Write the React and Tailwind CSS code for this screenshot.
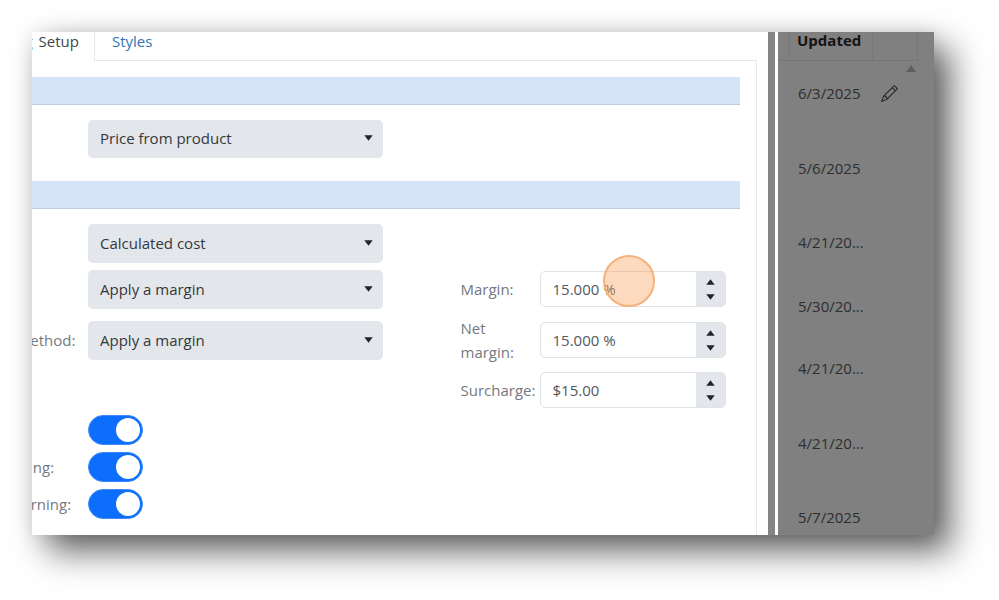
import React from "react";
import { BsPencil } from "react-icons/bs";

const font = { fontFamily: '"Open Sans", "Noto Sans", sans-serif' };

function Caret({ className = "" }) {
  return (
    <svg width="9" height="6" viewBox="0 0 9 6" className={className}>
      <path d="M0.3 0.3 H8.7 L4.5 5.7 Z" fill="currentColor" />
    </svg>
  );
}

function SelectBox({ label, className = "" }) {
  return (
    <div className={`w-[294.5px] rounded-[5px] bg-[#e3e6eb] flex items-center justify-between pl-[12px] pr-[10px] text-[15px] text-[#33383d] ${className}`}>
      <span className="-mt-[1px]">{label}</span>
      <Caret className="text-[#212529] -mt-[2px]" />
    </div>
  );
}

function Toggle() {
  return (
    <div className="w-[55px] h-[30px] rounded-full bg-[#0d6efd] border border-[#3d8bfd] flex items-center justify-end pr-[2px]">
      <div className="w-[24px] h-[24px] rounded-full bg-white" />
    </div>
  );
}

function NumberField({ value }) {
  return (
    <div className="w-[186px] h-[36px] rounded-[5px] border border-[#dfe2e6] bg-white flex overflow-hidden text-[15px] text-[#52585e]">
      <div className="flex-1 pl-[12px] flex items-center">{value}</div>
      <div className="w-[29px] bg-[#e3e6eb] flex flex-col items-center justify-center gap-[9px] text-[#212529]">
        <Caret className="rotate-180" />
        <Caret />
      </div>
    </div>
  );
}

function SectionBar({ className = "" }) {
  return <div className={`h-[28px] mr-[16px] bg-[#d5e5f7] border-b border-[#c3cedb] ${className}`} />;
}

function LabelRow({ label, offset, children, className = "" }) {
  return (
    <div className={`flex items-center ${className}`}>
      <div className="w-[56px] overflow-hidden whitespace-nowrap text-[15px] text-[#74797f]">
        <span className={`block ${offset}`}>{label}</span>
      </div>
      {children}
    </div>
  );
}

function MarginRow({ label, value, className = "" }) {
  return (
    <div className={`flex items-center ${className}`}>
      <div className="w-[79px] text-[15px] leading-[24px] text-[#74797f]">{label}</div>
      <NumberField value={value} />
    </div>
  );
}

const dates = [
  ["6/3/2025", "h-[75px]", true],
  ["5/6/2025", "h-[74px]"],
  ["4/21/20...", "h-[64px]"],
  ["5/30/20...", "h-[62px]"],
  ["4/21/20...", "h-[75px]"],
  ["4/21/20...", "h-[74px]"],
  ["5/7/2025", "h-[30px]"],
];

export default function App() {
  return (
    <div className="w-[999px] h-[600px] bg-white pt-[32px] pl-[32px] overflow-hidden" style={font}>
      <div className="relative w-[902px] h-[503px] flex bg-white shadow-[0_0_18px_rgba(0,0,0,0.1),16px_16px_32px_rgba(0,0,0,0.62)]">
        {/* Left form panel */}
        <div className="w-[736px] h-full overflow-hidden bg-white flex flex-col">
          <div className="h-[29px] flex shrink-0 border-b border-[#e6e8eb] mr-[11px]">
            <div className="w-[63px] h-[29px] border-r border-[#e6e8eb] bg-white overflow-hidden whitespace-nowrap flex justify-end pr-[15px] text-[15px] leading-[18px] text-[#42474c]">
              <span className="[word-spacing:2px]">g Setup</span>
            </div>
            <div className="pl-[17px] text-[15px] leading-[18px] text-[#2f75b8]">Styles</div>
          </div>
          <div className="flex-1 mr-[11px] border-r border-[#e6e8eb] pt-[16px] flex flex-col">
            <SectionBar />
            <LabelRow className="mt-[15px]" label="" offset="">
              <SelectBox label="Price from product" className="h-[38px]" />
            </LabelRow>
            <SectionBar className="mt-[23px]" />
            <div className="flex">
              <div className="flex flex-col shrink-0">
                <LabelRow className="mt-[15px]" label="" offset="">
                  <SelectBox label="Calculated cost" className="h-[39px]" />
                </LabelRow>
                <LabelRow className="mt-[7px]" label="" offset="">
                  <SelectBox label="Apply a margin" className="h-[39px]" />
                </LabelRow>
                <LabelRow className="mt-[12px]" label="Calculation method:" offset="-ml-[97px]">
                  <SelectBox label="Apply a margin" className="h-[39px]" />
                </LabelRow>
              </div>
              <div className="ml-[78px] pt-[62px] flex flex-col">
                <MarginRow label="Margin:" value="15.000 %" />
                <MarginRow label={<>Net<br />margin:</>} value="15.000 %" className="mt-[9px]" />
                <MarginRow label="Surcharge:" value="$15.00" className="mt-[8px]" />
              </div>
            </div>
            <LabelRow className="mt-[7px]" label="" offset="">
              <Toggle />
            </LabelRow>
            <LabelRow className="mt-[7px]" label="Low margin warning:" offset="-ml-[124px]">
              <Toggle />
            </LabelRow>
            <LabelRow className="mt-[7px]" label="Low margin warning:" offset="-ml-[107px]">
              <Toggle />
            </LabelRow>
          </div>
        </div>

        {/* Divider */}
        <div className="w-[7px] h-full bg-[#858585]" />
        <div className="w-[3px] h-full bg-white" />

        {/* Dimmed table panel */}
        <div className="w-[156px] h-full bg-[#808080] overflow-hidden text-[15px] text-[#2e2e2e]">
          <div className="h-[29px] flex border-b border-[#767676] mr-[15px] pl-[11px]">
            <div className="w-[84px] border-l border-r border-[#787878] pl-[7px] font-bold text-[#141414] leading-[16px]">Updated</div>
            <div className="w-[45px] border-r border-[#787878]" />
          </div>
          <div className="relative pt-[20px] pl-[20px]">
            {dates.map(([d, h, pencil], i) => (
              <div key={i} className={`${h} flex items-start leading-[24px] whitespace-nowrap`}>
                <span>{d}</span>
                {pencil && <BsPencil className="ml-[21px] mt-[4px] text-[#262626]" size={17} />}
              </div>
            ))}
            <svg width="10" height="7" viewBox="0 0 10 7" className="absolute left-[128px] top-[4px] text-[#5e5e5e]">
              <path d="M5 0 L10 7 H0 Z" fill="currentColor" />
            </svg>
          </div>
        </div>

        {/* Cursor highlight */}
        <div className="absolute left-[571px] top-[223px] w-[52px] h-[52px] rounded-full bg-[#fb9f5a]/40 border-2 border-[#f5b27c]" />
      </div>
    </div>
  );
}
